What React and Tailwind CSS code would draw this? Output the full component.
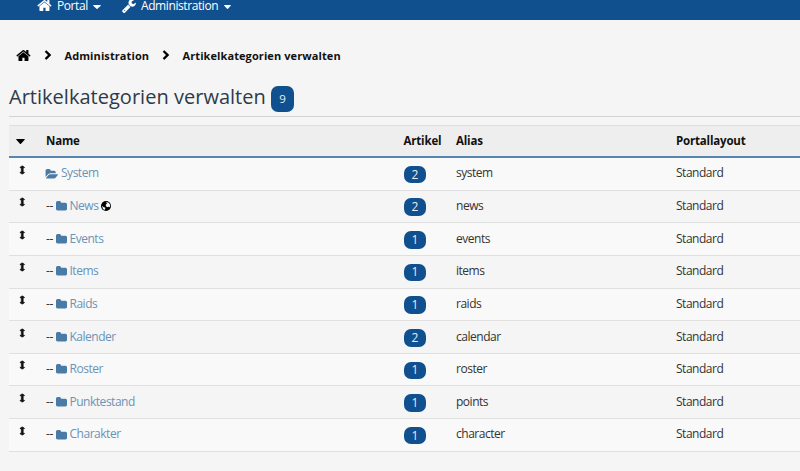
import React from "react";

const paths = {
  home: "M1408 992v480q0 26-19 45t-45 19h-384v-384h-256v384h-384q-26 0-45-19t-19-45v-480q0-1 .5-3t.5-3l575-474 575 474q1 2 1 6zm223-69l-62 74q-8 9-21 11h-3q-13 0-21-7l-692-577-692 577q-12 8-24 7-13-2-21-11l-62-74q-8-10-7-23.5t11-21.5l719-599q32-26 76-26t76 26l244 204v-195q0-14 9-23t23-9h192q14 0 23 9t9 23v408l219 182q10 8 11 21.5t-7 23.5z",
  folder: "M1728 608v704q0 92-66 158t-158 66h-1216q-92 0-158-66t-66-158v-960q0-92 66-158t158-66h320q92 0 158 66t66 158v32h672q92 0 158 66t66 158z",
  folderOpen: "M1815 952q0 31-31 66l-336 396q-43 51-120.5 86.5t-143.5 35.5h-1088q-34 0-60.5-13t-26.5-43q0-31 31-66l336-396q43-51 120.5-86.5t143.5-35.5h1088q34 0 60.5 13t26.5 43zm-343-344v160h-832q-94 0-197 47.5t-164 119.5l-337 396-5 6q0-4-.5-12.5t-.5-12.5v-960q0-92 66-158t158-66h320q92 0 158 66t66 158v32h544q92 0 158 66t66 158z",
  chevron: "M1363 877l-742 742q-19 19-45 19t-45-19l-166-166q-19-19-19-45t19-45l531-531-531-531q-19-19-19-45t19-45l166-166q19-19 45-19t45 19l742 742q19 19 19 45t-19 45z",
  wrench: "M448 1472q0-26-19-45t-45-19-45 19-19 45 19 45 45 19 45-19 19-45zm644-420l-682 682q-37 37-90 37-52 0-91-37l-106-108q-38-36-38-90 0-53 38-91l681-681q39 98 114.5 173.5t173.5 114.5zm634-435q0 39-23 106-47 134-164.5 217.5t-258.5 83.5q-185 0-316.5-131.5t-131.5-316.5 131.5-316.5 316.5-131.5q58 0 121.5 16.5t107.5 46.5q16 11 16 28t-16 28l-293 169v224l193 107q5-3 79-48.5t135.5-81 70.5-35.5q15 0 23.5 10t8.5 25z",
  arrows: "M1216 320q0 26-19 45t-45 19h-128v1024h128q26 0 45 19t19 45-19 45l-256 256q-19 19-45 19t-45-19l-256-256q-19-19-19-45t19-45 45-19h128v-1024h-128q-26 0-45-19t-19-45 19-45l256-256q19-19 45-19t45 19l256 256q19 19 19 45z",
};

function Icon({ d, box = "0 0 1792 1792", className = "", stroke = 0 }) {
  return (
    <svg viewBox={box} preserveAspectRatio="none" fill="currentColor" stroke="currentColor" strokeWidth={stroke} className={"block shrink-0 overflow-visible " + className}>
      <path d={d} />
    </svg>
  );
}

function Caret({ className }) {
  return <Icon box="0 0 10 6" d="M.8 0h8.4q1 .2.4 1L5.6 5.6q-.6.6-1.2 0L.4 1Q-.2.2.8 0z" className={className} />;
}

function Globe({ className }) {
  return (
    <svg viewBox="0 0 20 20" className={"block shrink-0 " + className}>
      <circle cx="10" cy="10" r="10" fill="#000" />
      <path d="M10 2l4.5 1 3 3 1 4-1.5 2.5-2.5-1-2 1-3-2.5.3-3 2.2-2z" fill="#f5f5f5" />
      <path d="M2 9.5l3 2.3 4 1.5-.8 2.5-1.5 2.4-3-2.7z" fill="#f5f5f5" />
    </svg>
  );
}

const rows = [
  ["System", 2, "system"],
  ["News", 2, "news"],
  ["Events", 1, "events"],
  ["Items", 1, "items"],
  ["Raids", 1, "raids"],
  ["Kalender", 2, "calendar"],
  ["Roster", 1, "roster"],
  ["Punktestand", 1, "points"],
  ["Charakter", 1, "character"],
];

function Row({ name, count, alias, index }) {
  const root = index === 0;
  return (
    <div className="grid h-[32.65px] grid-cols-[37px_357.5px_52.5px_220px_1fr] items-center border-b border-[#e0e0e0] pb-px odd:bg-[#f9f9f9]">
      <div className="flex h-full w-[27px] justify-center pt-[7.5px]">
        <Icon d={paths.arrows} box="576 0 640 1792" stroke={130} className="h-[8px] w-[4.5px] text-[#111]" />
      </div>
      <div className="flex items-center whitespace-nowrap">
        {!root && <span className="w-[10px]">--</span>}
        {root ? (
          <Icon d={paths.folderOpen} box="0 128 1815 1408" className="mr-[3px] h-[9.5px] w-[12px] text-[#4a7ba6]" />
        ) : (
          <Icon d={paths.folder} box="64 128 1664 1408" className="mr-[2.5px] h-[9.5px] w-[11px] text-[#4a7ba6]" />
        )}
        <span className="text-[#6b93b5]">{name}</span>
        {name === "News" && <Globe className="ml-[3px] h-[10px] w-[10px]" />}
      </div>
      <div>
        <span className="mt-[2.5px] flex h-[17.5px] w-[22.5px] items-center justify-center rounded-[7px] bg-[#11508f] text-[12px] leading-none text-[#e4edf6]">{count}</span>
      </div>
      <span>{alias}</span>
      <span>Standard</span>
    </div>
  );
}

export default function App() {
  return (
    <div className="h-[471px] w-[800px] overflow-hidden bg-[#f5f5f5] font-['Open_Sans',sans-serif] text-[12px] leading-4 tracking-[-0.48px] text-[#333]">
      <nav className="flex h-5 items-start bg-[#11508f] pl-[38px] text-white">
        <Icon d={paths.home} box="90 250 1612 1286" className="h-[11px] w-[14px]" />
        <span className="ml-[5px] mt-[-2px] w-[36px] tracking-[-0.43px]">Portal</span>
        <Caret className="mt-[5px] h-[4px] w-[8px]" />
        <Icon d={paths.wrench} box="64 128 1664 1643" className="ml-[21px] mt-[-1px] h-[14px] w-[14px]" />
        <span className="ml-[5px] mt-[-2px] w-[83px] tracking-[-0.41px]">Administration</span>
        <Caret className="mt-[5px] h-[4px] w-[7px]" />
      </nav>
      <div className="mt-[28px] flex h-4 items-center pl-[17px] text-[11px] font-bold tracking-[0.09px] text-[#111]">
        <Icon d={paths.home} box="90 250 1612 1286" className="mt-[-2px] h-[11px] w-[14px] text-black" />
        <Icon d={paths.chevron} box="346 108 1036 1530" stroke={60} className="ml-[13.5px] mt-[-2px] h-[8.5px] w-[6px] text-black" />
        <span className="ml-[14px] w-[98px]">Administration</span>
        <Icon d={paths.chevron} box="346 108 1036 1530" stroke={60} className="mt-[-2px] h-[8.5px] w-[6px] text-black" />
        <span className="ml-[14px]">Artikelkategorien verwalten</span>
      </div>
      <div className="ml-[9px] mt-[20px] flex h-[33px] items-start border-b border-[#d4d4d4]">
        <h1 className="mt-[-1px] w-[261.5px] whitespace-nowrap text-[20px] leading-[27px] tracking-[0.02px] text-[#2d3b4a]">Artikelkategorien verwalten</h1>
        <span className="mt-[2px] flex h-[26px] w-[23.5px] items-center justify-center rounded-[7px] bg-[#11508f] text-[11.5px] leading-none text-[#e4edf6]">9</span>
      </div>
      <div className="ml-[9px] mt-[8px]">
        <div className="grid h-[33px] grid-cols-[37px_357.5px_52.5px_220px_1fr] items-center border-b-2 border-t border-b-[#5585b0] border-t-[#e0e0e0] bg-[#eee] text-[11.5px] font-bold tracking-[-0.18px] text-[#111]">
          <Caret className="ml-[6.5px] h-[5px] w-[9px] text-black" />
          <span>Name</span>
          <span>Artikel</span>
          <span>Alias</span>
          <span>Portallayout</span>
        </div>
        <div>
          {rows.map(([name, count, alias], i) => (
            <Row key={name} name={name} count={count} alias={alias} index={i} />
          ))}
        </div>
      </div>
    </div>
  );
}
